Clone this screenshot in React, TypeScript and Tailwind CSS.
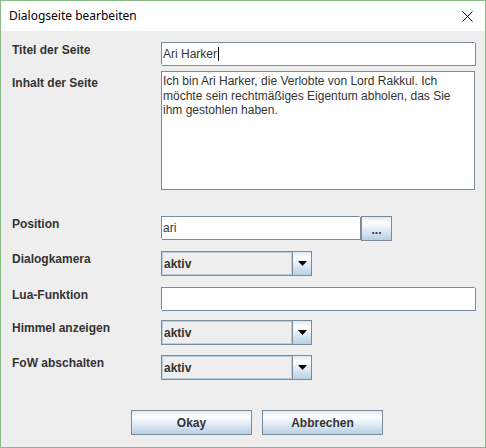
const FONT = "font-['Liberation_Sans',Arial,sans-serif]"
const BTN_BG =
  'bg-linear-to-b from-[#dde8f3] from-0% via-white via-25% to-[#b8cfe5] to-100%'

function Label({ children, offset = 'pt-[1px]' }: { children: string; offset?: string }) {
  return (
    <div className={`w-[160px] shrink-0 pl-[11px] ${offset} text-[12px] font-bold leading-[15px] text-[#333333]`}>
      {children}
    </div>
  )
}

function TextInput({ value, width, caret }: { value: string; width: string; caret?: boolean }) {
  return (
    <div
      className={`flex h-[23px] ${width} items-center border border-[#7a8a99] border-r-white border-b-white bg-white pl-[1px] text-[12px] text-[#333333] shadow-[1px_1px_0_#7a8a99]`}
    >
      <span>{value}</span>
      {caret && <span className="ml-[1px] h-[14px] w-px bg-black" />}
    </div>
  )
}

function Combo({ value }: { value: string }) {
  return (
    <div className="flex h-[25px] w-[151px] border border-[#7a8a99]">
      <div className="flex flex-1 items-center border border-[#b8cfe5] bg-[#eeeeee] pl-[1px] text-[12px] font-bold text-[#333333]">
        {value}
      </div>
      <div className={`flex w-[19px] items-center justify-center border-l border-[#7a8a99] ${BTN_BG}`}>
        <svg width="9" height="5" viewBox="0 0 9 5">
          <polygon points="0,0 9,0 4.5,5" fill="#000" />
        </svg>
      </div>
    </div>
  )
}

export default function App() {
  return (
    <div className={`flex h-[448px] w-[486px] flex-col border border-[#89b986] bg-[#eeeeee] ${FONT}`}>
      {/* title bar */}
      <div className="flex h-[30px] shrink-0 items-center justify-between bg-white pl-[8px] pr-[12px]">
        <span className="font-['Noto_Sans',sans-serif] text-[12px] text-black">Dialogseite bearbeiten</span>
        <svg width="11" height="11" viewBox="0 0 11 11" className="mt-[1px]">
          <path d="M0.5 0.5 L10.5 10.5 M10.5 0.5 L0.5 10.5" stroke="#000" strokeWidth="1" />
        </svg>
      </div>

      {/* form */}
      <div className="flex flex-col pt-[11px]">
        <div className="flex">
          <Label>Titel der Seite</Label>
          <TextInput value="Ari Harker" width="w-[314px]" caret />
        </div>

        <div className="mt-[6px] flex">
          <Label offset="pt-[5px]">Inhalt der Seite</Label>
          <div className="h-[119px] w-[314px] border border-[#7a8a99] bg-white pl-[1px] pt-[2px] text-[12px] leading-[14.5px] text-[#333333]">
            Ich bin Ari Harker, die Verlobte von Lord Rakkul. Ich
            <br />
            möchte sein rechtmäßiges Eigentum abholen, das Sie
            <br />
            ihm gestohlen haben.
          </div>
        </div>

        <div className="mt-[26px] flex">
          <Label>Position</Label>
          <TextInput value="ari" width="w-[199px]" />
          <button
            className={`ml-[1px] h-[25px] w-[31px] border border-[#7a8a99] pt-[3px] text-[12px] font-bold leading-none text-[#333333] ${BTN_BG}`}
          >
            ...
          </button>
        </div>

        <div className="mt-[10px] flex">
          <Label>Dialogkamera</Label>
          <Combo value="aktiv" />
        </div>

        <div className="mt-[11px] flex">
          <Label>Lua-Funktion</Label>
          <TextInput value="" width="w-[314px]" />
        </div>

        <div className="mt-[10px] flex">
          <Label>Himmel anzeigen</Label>
          <Combo value="aktiv" />
        </div>

        <div className="mt-[10px] flex">
          <Label>FoW abschalten</Label>
          <Combo value="aktiv" />
        </div>

        <div className="mt-[30px] flex gap-[10px] pl-[130px]">
          <button
            className={`h-[25px] w-[121px] border border-[#7a8a99] text-[12px] font-bold text-[#333333] ${BTN_BG}`}
          >
            Okay
          </button>
          <button
            className={`h-[25px] w-[121px] border border-[#7a8a99] text-[12px] font-bold text-[#333333] ${BTN_BG}`}
          >
            Abbrechen
          </button>
        </div>
      </div>
    </div>
  )
}
